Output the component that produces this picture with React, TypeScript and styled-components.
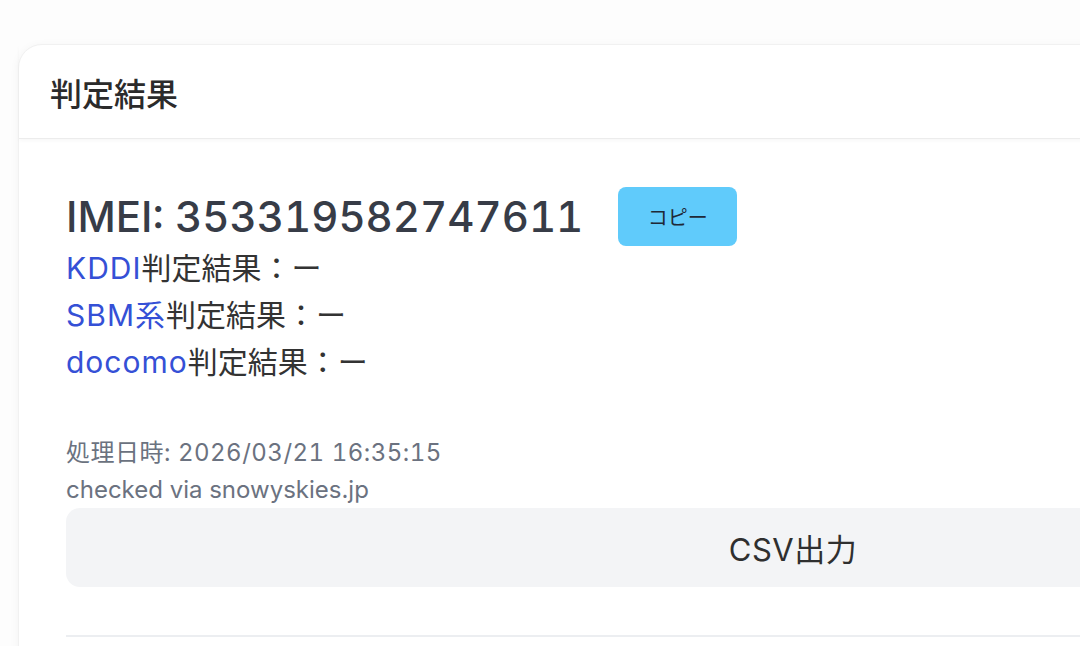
import React from 'react'
import styled, { createGlobalStyle } from 'styled-components'

const GlobalStyle = createGlobalStyle`
  html, body {
    margin: 0;
    padding: 0;
    background: #fdfdfd;
    overflow: hidden;
  }

  body {
    font-family: Inter, "Noto Sans CJK JP", sans-serif;
    color: #374151;
  }
`

const StyledPage = styled.div`
  padding: 44px 0 0 18px;
  width: 1600px;
`

const StyledCard = styled.section`
  width: 1548px;
  background: #ffffff;
  border-radius: 24px;
  border: 1px solid #f1f1f1;
  box-shadow: 0 2px 10px rgba(0, 0, 0, 0.05);
`

const StyledHeader = styled.header`
  height: 93px;
  display: flex;
  align-items: center;
  padding: 0 31px;
  border-bottom: 1px solid #ececec;
  box-shadow: 0 2px 4px rgba(0, 0, 0, 0.03);

  h2 {
    margin: 0;
    font-size: 32px;
    font-weight: 500;
    color: #2b2b2b;
  }
`

const StyledBody = styled.div`
  padding: 48px 47px 40px 47px;
`

const StyledImeiRow = styled.div`
  display: flex;
  align-items: center;
  gap: 35px;
  height: 58px;
`

const StyledImei = styled.h3`
  margin: 0;
  font-size: 42px;
  font-weight: 500;
  color: #373c47;
  font-variant-numeric: tabular-nums;
`

const StyledCopyButton = styled.button`
  width: 119px;
  height: 59px;
  border: none;
  border-radius: 8px;
  background: #60cbfb;
  color: #1f2937;
  font-family: inherit;
  font-size: 20px;
`

const StyledResultList = styled.ul`
  list-style: none;
  margin: 0;
  padding: 0;
`

const StyledResult = styled.li`
  font-size: 30px;
  line-height: 47px;
  color: #333333;

  span {
    color: #3550d6;
    letter-spacing: 1px;
  }
`

const StyledMeta = styled.div`
  margin-top: 48px;
  font-size: 24px;
  line-height: 37px;
  color: #6b7280;
`

const StyledDate = styled.div`
  letter-spacing: 0.5px;
  font-variant-numeric: tabular-nums;
`

const StyledCsvButton = styled.button`
  display: block;
  width: 100%;
  height: 79px;
  border: none;
  border-radius: 14px;
  background: #f3f4f6;
  color: #2f2f2f;
  font-family: inherit;
  font-size: 31px;
  letter-spacing: 0.5px;
`

const StyledDivider = styled.hr`
  margin: 48px 0 0 0;
  border: none;
  border-top: 2px solid #eceef1;
`

const carriers = ['KDDI', 'SBM系', 'docomo']

const App: React.FC = () => {
  return (
    <>
      <GlobalStyle />
      <StyledPage>
        <StyledCard>
          <StyledHeader>
            <h2>判定結果</h2>
          </StyledHeader>
          <StyledBody>
            <StyledImeiRow>
              <StyledImei>IMEI: 353319582747611</StyledImei>
              <StyledCopyButton>コピー</StyledCopyButton>
            </StyledImeiRow>
            <StyledResultList>
              {carriers.map((name) => (
                <StyledResult key={name}>
                  <span>{name}</span>判定結果：ー
                </StyledResult>
              ))}
            </StyledResultList>
            <StyledMeta>
              <StyledDate>処理日時: 2026/03/21 16:35:15</StyledDate>
              <div>checked via snowyskies.jp</div>
            </StyledMeta>
            <StyledCsvButton>CSV出力</StyledCsvButton>
            <StyledDivider />
          </StyledBody>
        </StyledCard>
      </StyledPage>
    </>
  )
}

export default App
